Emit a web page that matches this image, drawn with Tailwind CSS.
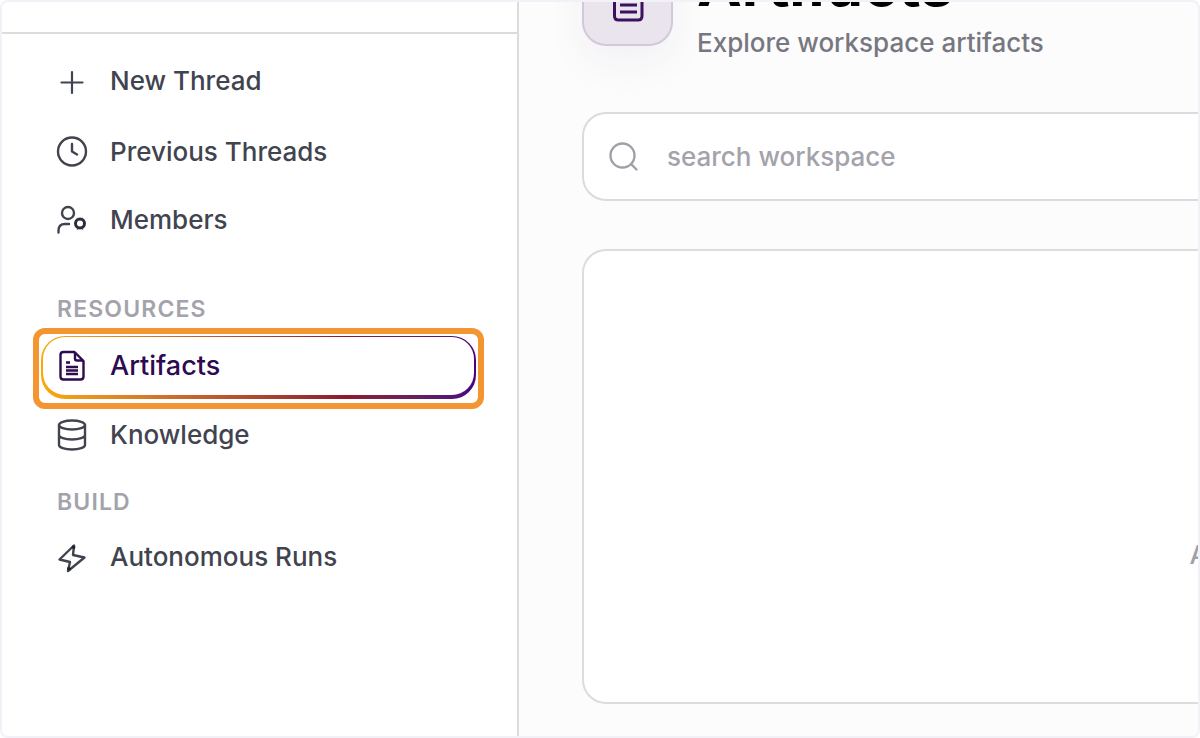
<!DOCTYPE html>
<html lang="en">
<head>
  <meta charset="UTF-8">
  <meta name="viewport" content="width=device-width, initial-scale=1.0">
  <title>Artifacts</title>
  <script src="https://cdn.jsdelivr.net/npm/@tailwindcss/browser@4"></script>
</head>
<body class="bg-white font-['Inter',sans-serif] text-[26px] leading-8 font-medium text-[#41444f]">
  <div class="flex h-screen overflow-hidden rounded-lg border-2 border-[#f2f1f7] bg-[#fcfcfc]">

    <!-- Sidebar -->
    <aside class="w-[517px] shrink-0 border-r-2 border-[#dcdcdc] bg-white">
      <div class="h-8 border-b-2 border-[#dcdcdc]"></div>
      <nav class="pt-[15px] pr-[41px] pl-[39px]">
        <a href="#" class="flex h-16 items-center gap-[22px] px-[15px]">
          <svg class="size-8 shrink-0" viewBox="0 0 32 32" fill="none" stroke="currentColor" stroke-width="2.200" stroke-linecap="round"><path d="M16 7v21M5.500 17.500h21"/></svg>
          New Thread
        </a>
        <ul class="mt-[7px] space-y-1">
          <li>
            <a href="#" class="flex h-16 items-center gap-[22px] px-[15px]">
              <svg class="size-8 shrink-0" viewBox="0 0 32 32" fill="none" stroke="currentColor" stroke-width="2.400" stroke-linecap="round" stroke-linejoin="round"><circle cx="16" cy="15.500" r="14"/><path d="M16 8v7.500l5 3"/></svg>
              Previous Threads
            </a>
          </li>
          <li>
            <a href="#" class="flex h-16 items-center gap-[22px] px-[15px]">
              <svg class="size-8 shrink-0" viewBox="0 0 32 32" fill="none" stroke="currentColor" stroke-width="2.400" stroke-linecap="round" stroke-linejoin="round"><circle cx="12" cy="9" r="6"/><path d="M2.500 28.500v-2q0-6.500 6.500-6.500h4"/><circle cx="24" cy="19.500" r="4.500" stroke="#2b2e3a" stroke-width="3"/><path d="M21.500 14.500v.5M26.500 14.500v.5M21.500 24.500v.5M26.500 24.500v.5" stroke-width="1.500"/></svg>
              Members
            </a>
          </li>
        </ul>

        <h2 class="mt-[41px] px-4 text-[23px] font-semibold tracking-wider text-[#a3a3ab]">RESOURCES</h2>
        <ul class="mt-[11px] space-y-1">
          <li class="relative">
            <!-- Gradient outline, thicker along the bottom -->
            <a href="#" class="block h-[63px] rounded-[24px] bg-linear-to-r from-[#fba905] via-[#8d1a2d] via-70% to-[#4b0082] px-[2px] pt-px pb-1 text-[27px] text-[#2e0a50]">
              <span class="flex h-full items-center gap-[22px] rounded-[22px] bg-white px-[13px]">
                <svg class="size-8 shrink-0" viewBox="0 0 32 32" fill="none" stroke="currentColor" stroke-width="2.400" stroke-linejoin="round"><path d="M18.500 2H7.500Q4.500 2 4.500 5v21.500q0 3 3 3h17q3 0 3-3V11z"/><path d="M19 2v6.500q0 2 2 2h6M10 12.500h4M10 17h12M10 20.500h12M10 24h12"/></svg>
                Artifacts
              </span>
            </a>
            <!-- Highlight frame -->
            <div class="pointer-events-none absolute -inset-x-2 -top-2 -bottom-2.5 rounded-xl border-6 border-[#f39531]"></div>
          </li>
          <li>
            <a href="#" class="flex h-16 items-center gap-[22px] px-[15px]">
              <svg class="size-8 shrink-0" viewBox="0 0 32 32" fill="none" stroke="currentColor" stroke-width="2.400" stroke-linecap="round"><ellipse cx="16" cy="6" rx="13" ry="4.500"/><path d="M3 6v20c0 2.500 5.800 4.500 13 4.500s13-2 13-4.500V6M3 16c0 2.500 5.800 4.500 13 4.500s13-2 13-4.500"/></svg>
              Knowledge
            </a>
          </li>
        </ul>

        <h2 class="mt-[19px] px-4 text-[23px] font-semibold tracking-wider text-[#a3a3ab]">BUILD</h2>
        <ul class="mt-[7px]">
          <li>
            <a href="#" class="flex h-16 items-center gap-[22px] px-[15px]">
              <svg class="size-8 shrink-0" viewBox="0 0 32 32" fill="none" stroke="currentColor" stroke-width="2.400" stroke-linejoin="round"><path d="M18 4.500 3.500 18.500l10.500 2.500-2 9L28.500 16.500 17 14z"/><path d="m17 7.500 1-2.500M12.500 29l1-2.500" stroke="#1f2130" stroke-width="3.500"/></svg>
              Autonomous Runs
            </a>
          </li>
        </ul>
      </nav>
    </aside>

    <!-- Main -->
    <main class="flex min-w-0 flex-1 flex-col pb-8 pl-[63px]">
      <!-- Header is scrolled partly out of view -->
      <header class="flex h-11 shrink-0 items-end gap-6">
        <div class="flex size-[91px] shrink-0 items-center justify-center rounded-[24px] border-2 border-[#d3c8da] bg-[#eae5ec] text-[#3b1160] shadow-[0_16px_40px_rgba(60,20,100,0.05)]">
          <svg class="mt-1 size-10" viewBox="0 0 40 40" fill="none" stroke="currentColor" stroke-width="3" stroke-linejoin="round"><path d="M24 3H9.500Q6.500 3 6.500 6v27q0 4 4 4h19.500q4 0 4-4V13z"/><path d="M24 3v10h10M13 15h5M12 22h17M12 29h17"/></svg>
        </div>
        <div class="-mb-[13px]">
          <h1 class="mb-[13px] text-[60px] leading-[60px] font-bold text-black">Artifacts</h1>
          <p class="text-[#777781]">Explore workspace artifacts</p>
        </div>
      </header>

      <label class="mt-[66px] flex h-[89px] shrink-0 items-center gap-[27px] rounded-l-[24px] border-2 border-r-0 border-[#d9dbde] bg-white px-6">
        <svg class="size-8 shrink-0 text-[#a0a0a8]" viewBox="0 0 32 32" fill="none" stroke="currentColor" stroke-width="2.400" stroke-linecap="round"><circle cx="14.500" cy="14.500" r="12"/><path d="m23.500 23.500 5 5"/></svg>
        <input type="search" aria-label="search workspace" placeholder="search workspace" class="min-w-0 flex-1 bg-transparent outline-none placeholder:text-[#a3a3ab]">
      </label>

      <section class="mt-12 flex flex-1 items-center justify-end overflow-hidden rounded-l-[24px] border-2 border-r-0 border-[#dcdcdc] bg-white">
        <p class="-mr-2.5 pt-[156px] text-[#a0a0a8]">A</p>
      </section>
    </main>
  </div>
</body>
</html>
